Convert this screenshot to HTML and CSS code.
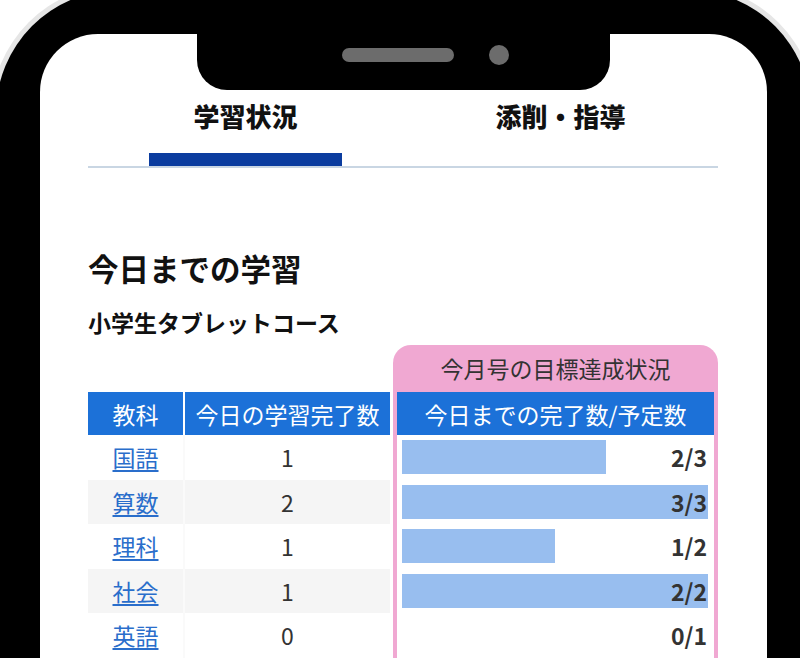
FILE: index.html
```html
<!DOCTYPE html>
<html lang="ja">
<head>
  <meta charset="utf-8">
  <title>学習状況</title>
  <link rel="stylesheet" href="styles.css">
</head>
<body>
  <div class="phone">
    <div class="screen">
      <div class="notch">
        <span class="speaker"></span>
        <span class="camera"></span>
      </div>

      <div class="content">
        <nav class="tabs">
          <div class="tab active">
            <span class="tab-label">学習状況</span>
            <span class="tab-bar"></span>
          </div>
          <div class="tab">
            <span class="tab-label">添削・指導</span>
            <span class="tab-bar"></span>
          </div>
        </nav>

        <h2 class="section-title">今日までの学習</h2>
        <h3 class="course-name">小学生タブレットコース</h3>

        <table class="progress-table">
          <colgroup>
            <col class="col-subject">
            <col class="col-today">
            <col class="col-goal">
          </colgroup>
          <thead>
            <tr class="goal-row">
              <th></th>
              <th></th>
              <th class="goal-caption">今月号の目標達成状況</th>
            </tr>
            <tr class="head-row">
              <th class="cell-subject">教科</th>
              <th class="cell-today">今日の学習完了数</th>
              <th class="cell-goal">今日までの完了数/予定数</th>
            </tr>
          </thead>
          <tbody>
            <tr>
              <td class="cell-subject"><a href="#">国語</a></td>
              <td class="cell-today">1</td>
              <td class="cell-goal">
                <div class="meter"><span class="meter-fill" style="width: 66.7%"></span><span class="meter-text">2/3</span></div>
              </td>
            </tr>
            <tr>
              <td class="cell-subject"><a href="#">算数</a></td>
              <td class="cell-today">2</td>
              <td class="cell-goal">
                <div class="meter"><span class="meter-fill" style="width: 100%"></span><span class="meter-text">3/3</span></div>
              </td>
            </tr>
            <tr>
              <td class="cell-subject"><a href="#">理科</a></td>
              <td class="cell-today">1</td>
              <td class="cell-goal">
                <div class="meter"><span class="meter-fill" style="width: 50%"></span><span class="meter-text">1/2</span></div>
              </td>
            </tr>
            <tr>
              <td class="cell-subject"><a href="#">社会</a></td>
              <td class="cell-today">1</td>
              <td class="cell-goal">
                <div class="meter"><span class="meter-fill" style="width: 100%"></span><span class="meter-text">2/2</span></div>
              </td>
            </tr>
            <tr>
              <td class="cell-subject"><a href="#">英語</a></td>
              <td class="cell-today">0</td>
              <td class="cell-goal">
                <div class="meter"><span class="meter-fill" style="width: 0%"></span><span class="meter-text">0/1</span></div>
              </td>
            </tr>
          </tbody>
        </table>
      </div>
    </div>
  </div>
</body>
</html>
```

FILE: styles.css
```css
/* page + phone frame */
html, body {
  margin: 0;
  padding: 0;
  background: #ffffff;
  overflow: hidden;
  font-family: "Noto Sans CJK JP", "Noto Sans", sans-serif;
  color: #222;
}

.phone {
  box-sizing: border-box;
  width: 815px;
  height: 820px;
  margin: -10px 0 0 -4px;
  padding: 44px;
  background: #000;
  border-radius: 123px;
  box-shadow: 0 0 0 5px #e6e6e6;
}

.screen {
  position: relative;
  height: 100%;
  background: #ffffff;
  border-radius: 58px;
}

.notch {
  position: absolute;
  top: 0;
  left: 157px;
  box-sizing: border-box;
  width: 413px;
  height: 56px;
  padding: 0 0 14px 145px;
  display: flex;
  align-items: center;
  gap: 35px;
  background: #000;
  border-radius: 0 0 30px 30px;
}

.speaker {
  width: 112px;
  height: 14px;
  border-radius: 7px;
  background: #6c6c6c;
}

.camera {
  width: 20px;
  height: 20px;
  border-radius: 50%;
  background: #6c6c6c;
}

.content {
  padding: 64px 49px 0 48px;
}

/* tabs */
.tabs {
  display: flex;
  border-bottom: 2px solid #c9d6e3;
}

.tab {
  flex: 1;
  display: flex;
  flex-direction: column;
  align-items: center;
}

.tab-label {
  font-size: 26px;
  font-weight: 900;
  line-height: 36px;
  color: #111;
}

.tab-bar {
  width: 193px;
  height: 13px;
  margin-top: 19px;
}

.tab.active .tab-bar {
  background: #0b3c9f;
}

/* headings */
.section-title {
  margin: 80px 0 0 0;
  font-size: 30.5px;
  font-weight: 700;
  line-height: 40px;
  color: #111;
}

.course-name {
  margin: 18px 0 0 0;
  font-size: 23px;
  font-weight: 700;
  line-height: 32px;
  color: #111;
}

/* table */
.progress-table {
  margin-top: 7px;
  width: 630px;
  table-layout: fixed;
  border-collapse: separate;
  border-spacing: 0;
  font-size: 23px;
}

.col-subject { width: 97px; }
.col-today { width: 208px; }
.col-goal { width: 325px; }

.progress-table th,
.progress-table td {
  padding: 0;
  text-align: center;
  font-weight: 400;
}

.goal-row th {
  height: 47px;
}

.goal-caption {
  background: #f0a8d2;
  border-radius: 18px 18px 0 0;
  color: #333;
  line-height: 47px;
}

.head-row th {
  height: 43px;
  background: #1c71d8;
  color: #ffffff;
}

.head-row .cell-subject {
  border-right: 2px solid #fff;
}

.cell-today {
  border-right: 3px solid #fff;
}

.cell-goal {
  border-left: 4px solid #f0a8d2;
  border-right: 4px solid #f0a8d2;
}

tbody td {
  height: 44.5px;
  color: #333;
}

tbody tr:nth-child(even) .cell-subject,
tbody tr:nth-child(even) .cell-today {
  background: #f5f5f5;
}

tbody .cell-subject {
  border-right: 2px solid #fafafa;
}

.cell-subject a {
  color: #2a6ecb;
  text-decoration: underline;
  text-underline-offset: 3px;
}

tbody .cell-goal {
  padding: 5px 6px 5px 5px;
  box-sizing: border-box;
  background: #fff;
}

.meter {
  display: grid;
  height: 34px;
}

.meter-fill,
.meter-text {
  grid-area: 1 / 1;
}

.meter-fill {
  height: 100%;
  background: #98beef;
}

.meter-text {
  justify-self: end;
  align-self: center;
  padding-right: 1px;
  font-weight: 700;
  line-height: 34px;
  color: #333;
}
```
